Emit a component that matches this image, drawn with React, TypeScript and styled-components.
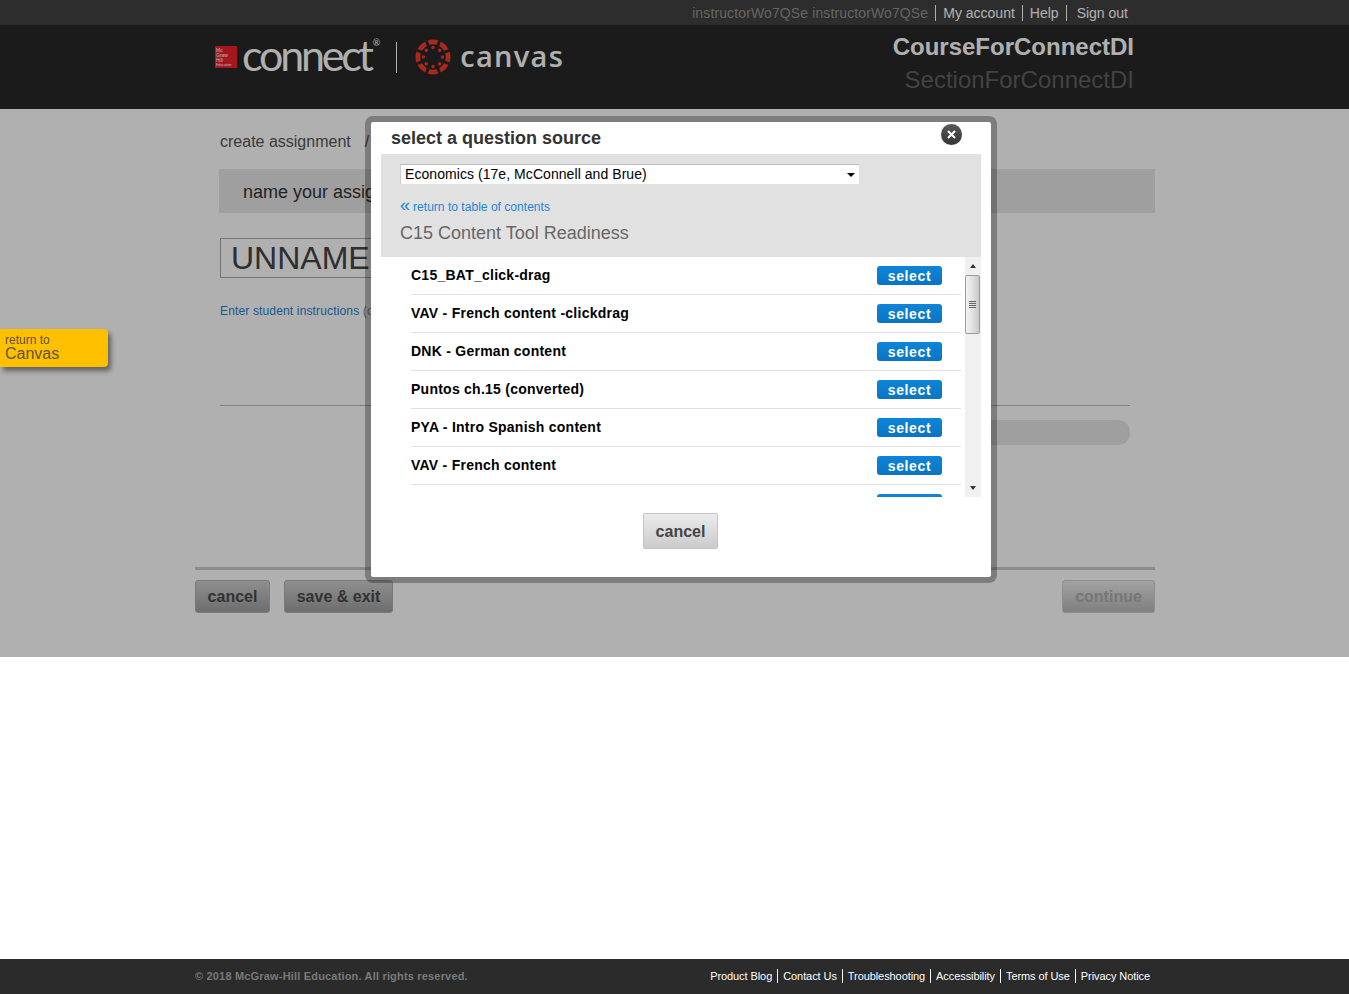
import React from "react";
import styled, { createGlobalStyle } from "styled-components";

const GlobalStyle = createGlobalStyle`
  html, body {
    margin: 0;
    padding: 0;
    background: #fff;
    font-family: "Liberation Sans", Arial, sans-serif;
  }
  * {
    box-sizing: border-box;
  }
`;

const Shell = styled.div`
  display: flex;
  flex-direction: column;
  justify-content: space-between;
  height: 994px;
  overflow: hidden;
`;

const Upper = styled.div`
  position: relative;
  height: 657px;
`;

const Scrim = styled.div`
  position: absolute;
  inset: 0;
  background: rgba(0, 0, 0, 0.31);
`;

const TopBar = styled.div`
  display: flex;
  align-items: center;
  justify-content: flex-end;
  height: 25px;
  padding-right: 221px;
  background: #424242;
  font-size: 14px;
  color: #fff;
`;

const TopItem = styled.a<{ $muted?: boolean }>`
  padding: 0 7px;
  line-height: 16px;
  border-right: 1px solid #fff;
  color: ${(p) => (p.$muted ? "#929292" : "#fff")};
  letter-spacing: ${(p) => (p.$muted ? "0.12px" : "0")};
  &:last-child {
    border-right: 0;
    padding: 0 0 0 10px;
  }
`;

const Header = styled.header`
  display: flex;
  justify-content: space-between;
  height: 84px;
  padding: 6px 215px 0 215px;
  background: #282828;
`;

const Brand = styled.div`
  display: flex;
  align-items: center;
  height: 52px;
`;

const McGrawBox = styled.div`
  display: flex;
  flex-direction: column;
  justify-content: center;
  width: 22px;
  height: 22px;
  padding-left: 1px;
  background: #f0222a;
  color: #fff;
  font-size: 5px;
  line-height: 5px;
  overflow: hidden;
  small {
    font-size: 3.5px;
    line-height: 4px;
  }
`;

const Wordmark = styled.div`
  display: flex;
  margin: -6px 0 0 5px;
  font-family: Lato, sans-serif;
  font-weight: 400;
  font-size: 43px;
  letter-spacing: -3.2px;
  color: #fff;
  sup {
    margin: 9px 0 0 2px;
    font-size: 9px;
    letter-spacing: 0;
    line-height: 9px;
  }
`;

const BrandRule = styled.div`
  width: 1px;
  height: 31px;
  margin: 0 18px 0 16px;
  background: #fff;
`;

const CanvasName = styled.div`
  margin: -4px 0 0 9px;
  font-family: "Open Sans", sans-serif;
  font-weight: 600;
  font-size: 29px;
  letter-spacing: 1.3px;
  color: #fff;
`;

const Course = styled.div`
  text-align: right;
  font-size: 24px;
  line-height: 33px;
  margin-top: -1px;
`;

const CourseName = styled.div`
  font-weight: bold;
  color: #fff;
`;

const SectionName = styled.div`
  color: #616161;
`;

const Main = styled.main`
  display: flex;
  flex-direction: column;
  width: 960px;
  margin-left: 195px;
  height: 548px;
  padding-top: 23px;
`;

const Crumb = styled.div`
  display: flex;
  gap: 14px;
  margin-left: 25px;
  font-size: 16px;
  line-height: 20px;
  color: #555;
`;

const NameBar = styled.div`
  height: 44px;
  margin: 17px 0 0 24px;
  padding-left: 24px;
  background: #e6e6e6;
  font-size: 18px;
  line-height: 46px;
  color: #333;
`;

const NameInput = styled.div`
  width: 640px;
  height: 40px;
  margin: 25px 0 0 25px;
  padding-left: 10px;
  border: 1px solid #aaa;
  font-size: 32px;
  line-height: 38px;
  color: #444;
`;

const InstructionLine = styled.div`
  margin: 25px 0 0 25px;
  font-size: 12px;
  line-height: 16px;
  letter-spacing: 0.15px;
  color: #888;
  a {
    color: #1d82cf;
  }
`;

const Rule = styled.div`
  height: 1px;
  width: 910px;
  margin: 86px 0 0 25px;
  background: #bababa;
`;

const ProgressRow = styled.div`
  display: flex;
  justify-content: flex-end;
  width: 935px;
  margin-top: 14px;
`;

const ProgressTrack = styled.div`
  width: 500px;
  height: 25px;
  border-radius: 12px;
  background: #e6e6e6;
`;

const ActionRule = styled.div`
  height: 3px;
  margin-top: 122px;
  background: #cbcbcb;
`;

const Actions = styled.div`
  display: flex;
  gap: 14px;
  margin-top: 10px;
`;

const PageButton = styled.button<{ $disabled?: boolean; $width: number }>`
  width: ${(p) => p.$width}px;
  height: 33px;
  padding: 0;
  margin-left: ${(p) => (p.$disabled ? "auto" : "0")};
  border: 1px solid ${(p) => (p.$disabled ? "#cecece" : "#b1b1b1")};
  border-radius: 3px;
  background: ${(p) =>
    p.$disabled
      ? "linear-gradient(#ebebeb, #b9b9b9)"
      : "linear-gradient(#cfcfcf, #9f9f9f)"};
  font-family: inherit;
  font-size: 16px;
  font-weight: bold;
  color: ${(p) => (p.$disabled ? "#acacac" : "#4a4a4a")};
`;

const ReturnTab = styled.a`
  position: absolute;
  left: 0;
  top: 329px;
  width: 108px;
  height: 38px;
  padding: 6px 0 0 5px;
  border-radius: 0 4px 4px 0;
  background: #ffc000;
  box-shadow: 3px 4px 5px rgba(0, 0, 0, 0.45);
  font-size: 12px;
  line-height: 11px;
  color: #5f5435;
  span {
    display: block;
    font-size: 16px;
    line-height: 16px;
  }
`;

const Modal = styled.section`
  position: absolute;
  left: 365px;
  top: 116px;
  display: flex;
  flex-direction: column;
  width: 632px;
  height: 467px;
  padding: 0 10px;
  border: 6px solid rgba(0, 0, 0, 0.29);
  border-radius: 8px;
  background: #fff;
  background-clip: padding-box;
`;

const ModalTitle = styled.h2`
  margin: 0;
  height: 32px;
  padding-left: 10px;
  font-size: 18px;
  line-height: 32px;
  font-weight: bold;
  color: #333;
`;

const CloseButton = styled.button`
  position: absolute;
  top: 2px;
  right: 29px;
  display: flex;
  align-items: center;
  justify-content: center;
  width: 21px;
  height: 21px;
  padding: 0;
  border: 0;
  border-radius: 50%;
  background: linear-gradient(#5a5a5a, #333);
  box-shadow: 0 0 1px rgba(0, 0, 0, 0.4);
`;

const SourcePanel = styled.div`
  height: 103px;
  padding: 10px 19px 0;
  background: #e1e1e1;
`;

const SelectWrap = styled.div`
  position: relative;
  width: 459px;
  height: 20px;
  &::after {
    content: "";
    position: absolute;
    right: 4px;
    top: 9px;
    border: 4px solid transparent;
    border-top: 4px solid #000;
    border-bottom: 0;
  }
`;

const SourceSelect = styled.select`
  display: block;
  width: 100%;
  height: 20px;
  padding: 0 0 2px 4px;
  border: 0;
  border-top: 1px solid #bbb;
  border-left: 1px solid #ccc;
  border-radius: 0;
  appearance: none;
  background: #fff;
  font-family: inherit;
  font-size: 14px;
  letter-spacing: 0.06px;
  color: #000;
`;

const BackLink = styled.a`
  display: flex;
  align-items: baseline;
  gap: 3px;
  margin-top: 13px;
  height: 20px;
  font-size: 12px;
  line-height: 20px;
  letter-spacing: 0.03px;
  color: #1a86d6;
  b {
    font-size: 18px;
    font-weight: normal;
    line-height: 16px;
  }
`;

const ChapterTitle = styled.div`
  margin-top: 5px;
  font-size: 18px;
  line-height: 22px;
  color: #666;
`;

const ListFrame = styled.div`
  display: flex;
  height: 240px;
`;

const List = styled.ul`
  flex: 1;
  margin: 0;
  padding: 0 4px 0 30px;
  list-style: none;
  overflow: hidden;
`;

const Row = styled.li`
  display: flex;
  align-items: center;
  justify-content: space-between;
  height: 38px;
  padding: 0 19px 0 0;
  border-bottom: 1px solid #e2e2e2;
  font-size: 14px;
  font-weight: bold;
  letter-spacing: 0.25px;
  color: #000;
`;

const RowName = styled.span`
  margin-top: -2px;
`;

const SelectButton = styled.button`
  width: 65px;
  height: 19px;
  padding: 1px 0 0;
  border: 0;
  border-radius: 3px;
  background: linear-gradient(#0d85d8, #0a74c2);
  font-family: inherit;
  font-size: 14px;
  font-weight: bold;
  letter-spacing: 0.6px;
  line-height: 18px;
  color: #fff;
`;

const ScrollTrack = styled.div`
  position: relative;
  display: flex;
  flex-direction: column;
  width: 16px;
  background: #f0f0f0;
`;

const ScrollArrow = styled.div<{ $down?: boolean }>`
  display: flex;
  align-items: center;
  justify-content: center;
  height: 18px;
  margin-top: ${(p) => (p.$down ? "auto" : "0")};
  &::before {
    content: "";
    border: 3.5px solid transparent;
    ${(p) =>
      p.$down
        ? "border-top: 4px solid #333; border-bottom: 0;"
        : "border-bottom: 4px solid #333; border-top: 0;"}
  }
`;

const ScrollThumb = styled.div`
  display: flex;
  flex-direction: column;
  align-items: center;
  justify-content: center;
  gap: 1px;
  height: 59px;
  width: 15px;
  border: 1px solid #9a9a9a;
  border-radius: 2px;
  background: linear-gradient(90deg, #f4f4f4, #dcdcdc 60%, #c8c8c8);
  i {
    display: block;
    width: 7px;
    height: 1px;
    background: #666;
  }
`;

const ModalFooter = styled.div`
  display: flex;
  justify-content: center;
  padding: 16px 1px 0 0;
`;

const ModalCancel = styled.button`
  width: 75px;
  height: 36px;
  padding: 2px 0 0;
  border: 1px solid #c4c4c4;
  border-radius: 2px;
  background: linear-gradient(#ebebeb, #cbcbcb);
  font-family: inherit;
  font-size: 16px;
  font-weight: bold;
  color: #444;
`;

const Footer = styled.footer`
  display: flex;
  align-items: center;
  justify-content: space-between;
  height: 35px;
  padding: 0 199px 2px 195px;
  background: #2b2b2b;
`;

const Copyright = styled.div`
  font-size: 11px;
  font-weight: bold;
  letter-spacing: 0.18px;
  color: #7a7a7a;
`;

const FooterLinks = styled.nav`
  display: flex;
`;

const FooterLink = styled.a`
  padding: 0 5px;
  font-size: 11px;
  line-height: 14px;
  letter-spacing: -0.08px;
  color: #fff;
  border-right: 1px solid #fff;
  &:last-child {
    border-right: 0;
    padding-right: 0;
  }
`;

const CanvasLogo = () => (
  <svg width="36" height="36" viewBox="-18 -18 36 36" fill="#f63a2c">
    {[0, 45, 90, 135, 180, 225, 270, 315].map((a) => (
      <g key={a} transform={`rotate(${a})`}>
        <path d="M-5.4 -16.6A17.5 17.5 0 0 1 5.4 -16.6L3.4 -12.2A12.6 12.6 0 0 0 -3.4 -12.2Z" />
        <circle cx="0" cy="-9.5" r="1.7" />
      </g>
    ))}
  </svg>
);

const CloseIcon = () => (
  <svg width="9" height="9" viewBox="0 0 9 9" stroke="#fff" strokeWidth="2">
    <path d="M1 1L8 8M8 1L1 8" />
  </svg>
);

const rows = [
  "C15_BAT_click-drag",
  "VAV - French content -clickdrag",
  "DNK - German content",
  "Puntos ch.15 (converted)",
  "PYA - Intro Spanish content",
  "VAV - French content",
  "",
];

const footerLinks = [
  "Product Blog",
  "Contact Us",
  "Troubleshooting",
  "Accessibility",
  "Terms of Use",
  "Privacy Notice",
];

export default function App() {
  return (
    <Shell>
      <GlobalStyle />
      <Upper>
        <TopBar>
          <TopItem $muted>instructorWo7QSe instructorWo7QSe</TopItem>
          <TopItem>My account</TopItem>
          <TopItem>Help</TopItem>
          <TopItem>Sign out</TopItem>
        </TopBar>
        <Header>
          <Brand>
            <McGrawBox>
              <div>Mc</div>
              <div>Graw</div>
              <div>Hill</div>
              <small>Education</small>
            </McGrawBox>
            <Wordmark>
              connect<sup>®</sup>
            </Wordmark>
            <BrandRule />
            <CanvasLogo />
            <CanvasName>canvas</CanvasName>
          </Brand>
          <Course>
            <CourseName>CourseForConnectDI</CourseName>
            <SectionName>SectionForConnectDI</SectionName>
          </Course>
        </Header>
        <Main>
          <Crumb>
            <span>create assignment</span>
            <span>/</span>
          </Crumb>
          <NameBar>name your assignment</NameBar>
          <NameInput>UNNAMED</NameInput>
          <InstructionLine>
            <a>Enter student instructions</a> (optional)
          </InstructionLine>
          <Rule />
          <ProgressRow>
            <ProgressTrack />
          </ProgressRow>
          <ActionRule />
          <Actions>
            <PageButton $width={75}>cancel</PageButton>
            <PageButton $width={109}>save &amp; exit</PageButton>
            <PageButton $width={93} $disabled>
              continue
            </PageButton>
          </Actions>
        </Main>
        <Scrim />
        <ReturnTab>
          return to
          <span>Canvas</span>
        </ReturnTab>
        <Modal>
          <ModalTitle>select a question source</ModalTitle>
          <CloseButton>
            <CloseIcon />
          </CloseButton>
          <SourcePanel>
            <SelectWrap>
              <SourceSelect defaultValue="eco">
                <option value="eco">Economics (17e, McConnell and Brue)</option>
              </SourceSelect>
            </SelectWrap>
            <BackLink>
              <b>«</b> return to table of contents
            </BackLink>
            <ChapterTitle>C15 Content Tool Readiness</ChapterTitle>
          </SourcePanel>
          <ListFrame>
            <List>
              {rows.map((name, i) => (
                <Row key={i}>
                  <RowName>{name}</RowName>
                  <SelectButton>select</SelectButton>
                </Row>
              ))}
            </List>
            <ScrollTrack>
              <ScrollArrow />
              <ScrollThumb>
                <i />
                <i />
                <i />
                <i />
              </ScrollThumb>
              <ScrollArrow $down />
            </ScrollTrack>
          </ListFrame>
          <ModalFooter>
            <ModalCancel>cancel</ModalCancel>
          </ModalFooter>
        </Modal>
      </Upper>
      <Footer>
        <Copyright>© 2018 McGraw-Hill Education. All rights reserved.</Copyright>
        <FooterLinks>
          {footerLinks.map((l) => (
            <FooterLink key={l}>{l}</FooterLink>
          ))}
        </FooterLinks>
      </Footer>
    </Shell>
  );
}
